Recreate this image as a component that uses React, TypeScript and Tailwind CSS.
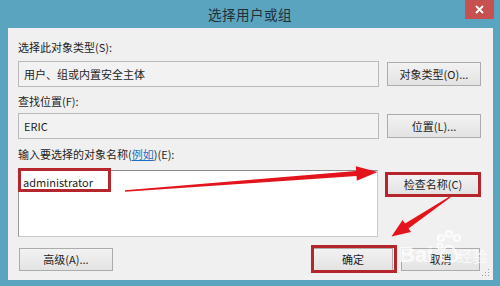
const font = { fontFamily: '"Noto Sans CJK SC", "Noto Sans", sans-serif' };

function Btn({ label, className = '' }: { label: string; className?: string }) {
	return (
		<div
			className={`flex items-center justify-center border border-[#acacac] bg-gradient-to-b from-[#f2f2f2] to-[#e3e3e3] text-[11px] text-[#222] ${className}`}
		>
			{label}
		</div>
	);
}

function RedBox({ className = '' }: { className?: string }) {
	return <div className={`absolute border-[3px] border-[#b4262c] pointer-events-none ${className}`} />;
}

export default function App() {
	return (
		<div className="relative w-[500px] h-[286px] overflow-hidden bg-[#5ba4bf] flex flex-col" style={font}>
			{/* title bar */}
			<div className="relative h-[28px] shrink-0 flex items-center justify-center">
				<span className="text-[13.5px] text-[#1f2f36] tracking-[0.5px]">选择用户或组</span>
				<div className="absolute top-0 right-[6px] w-[29px] h-[19px] bg-[#c75050] flex items-center justify-center">
					<svg width="9" height="9" viewBox="0 0 9 9">
						<path d="M1 1 L8 8 M8 1 L1 8" stroke="#fff" strokeWidth="1.8" />
					</svg>
				</div>
			</div>

			{/* dialog body */}
			<div className="relative ml-[8px] mr-[7px] mb-[6px] flex-1 bg-[#f0f0f0] pl-[10px] pr-[12px] pt-[12px] text-[11px] text-[#1e1e1e]">
				<div className="h-[14px] leading-[14px]">选择此对象类型(S):</div>
				<div className="mt-[7px] flex items-start gap-[8px]">
					<div className="w-[361px] h-[26px] border border-[#b9b9b9] bg-[#f2f2f2] pl-[5px] flex items-center">
						用户、组或内置安全主体
					</div>
					<Btn label="对象类型(O)..." className="w-[94px] h-[24px] mt-[1px]" />
				</div>

				<div className="mt-[7px] h-[14px] leading-[14px]">查找位置(F):</div>
				<div className="mt-[5px] flex items-start gap-[8px]">
					<div className="w-[361px] h-[26px] border border-[#b9b9b9] bg-[#f2f2f2] pl-[5px] flex items-center">
						ERIC
					</div>
					<Btn label="位置(L)..." className="w-[94px] h-[24px] mt-[1px]" />
				</div>

				<div className="mt-[8px] h-[14px] leading-[14px]">
					输入要选择的对象名称(<span className="text-[#1a6fc4] underline">例如</span>)(E):
				</div>
				<div className="mt-[9px] flex items-start gap-[8px]">
					<div className="w-[360px] h-[67px] border border-[#c9c9c9] border-t-[#8a8a8a] border-l-[#9a9a9a] bg-white pl-[4px] pt-[3px]">
						administrator
					</div>
					<div className="relative mt-[4px] ml-[1px]">
						<Btn label="检查名称(C)" className="w-[92px] h-[21px]" />
						<RedBox className="-inset-[2px]" />
					</div>
				</div>

				<div className="mt-[11px] flex items-start">
					<Btn label="高级(A)..." className="ml-[1px] w-[94px] h-[23px]" />
					<div className="relative ml-[200px]">
						<Btn label="确定" className="w-[80px] h-[23px]" />
						<RedBox className="-left-[2px] -right-[4px] -top-[3px] -bottom-[2px]" />
					</div>
					<Btn label="取消" className="ml-[8px] w-[79px] h-[23px]" />
				</div>

				{/* resize grip */}
				<svg className="absolute right-[3px] bottom-[3px]" width="8" height="8" viewBox="0 0 8 8">
					<g fill="#a0a0a0">
						<rect x="6" y="0" width="1" height="1" />
						<rect x="3" y="3" width="1" height="1" />
						<rect x="6" y="3" width="1" height="1" />
						<rect x="0" y="6" width="1" height="1" />
						<rect x="3" y="6" width="1" height="1" />
						<rect x="6" y="6" width="1" height="1" />
					</g>
				</svg>
			</div>

			{/* red box around administrator */}
			<RedBox className="left-[18px] top-[168px] w-[93px] h-[24px]" />

			{/* baidu watermark */}
			<div className="absolute left-[399px] top-[228px] w-[90px] h-[40px] pointer-events-none text-white/75">
				<span
					className="absolute left-0 top-[16px] text-[22px] font-bold leading-none"
					style={{ fontFamily: '"Liberation Sans", sans-serif' }}
				>
					Bai
				</span>
				<svg className="absolute left-[36px] top-[2px]" width="28" height="34" viewBox="0 0 28 34">
					<g fill="none" stroke="rgba(255,255,255,0.8)" strokeWidth="2.2">
						<circle cx="6" cy="8" r="3" />
						<circle cx="14" cy="4" r="3" />
						<circle cx="22" cy="8" r="3" />
						<circle cx="5" cy="16" r="2.5" />
						<path d="M7 30 C4 24 10 16 14 16 C18 16 24 24 21 30 C18 32 10 32 7 30 Z" />
					</g>
				</svg>
				<span className="absolute left-[58px] top-[20px] text-[15px] leading-none">经验</span>
			</div>

			{/* arrows */}
			<svg className="absolute left-0 top-0 pointer-events-none" width="500" height="286" viewBox="0 0 500 286">
				<polygon
					fill="#e3141c"
					points="125,190.2 356.1,171.1 355.8,166.3 377.5,172 356.8,180.8 356.5,176.1 125.1,191.8"
				/>
				<polygon
					fill="#e3141c"
					points="449.6,196.4 405.1,223.5 402.6,220 391.5,236.5 411,231.9 408.5,228.5 450.4,197.6"
				/>
			</svg>
		</div>
	);
}
